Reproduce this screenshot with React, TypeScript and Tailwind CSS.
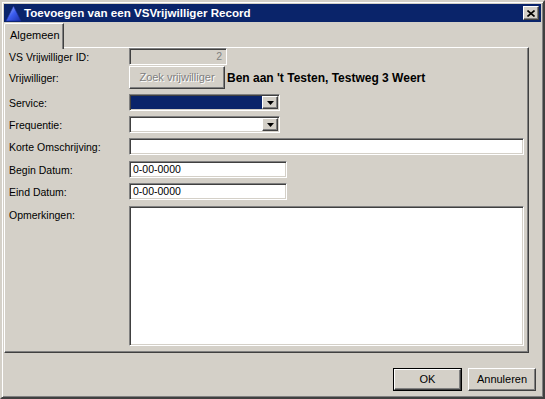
import React from 'react';

const sunken =
  'border border-t-[#808080] border-l-[#808080] border-b-white border-r-white shadow-[inset_1px_1px_0_#404040,inset_-1px_-1px_0_#d4d0c8]';
const raised =
  'border border-t-white border-l-white border-b-[#404040] border-r-[#404040] shadow-[inset_-1px_-1px_0_#808080,inset_1px_1px_0_#d4d0c8]';

function Label({ children }: { children: React.ReactNode }) {
  return <div className="w-[124px] shrink-0 pl-[4px] leading-[14px]">{children}</div>;
}

function DropArrow() {
  return (
    <div className={`${raised} w-[16px] h-full bg-[#d4d0c8] flex items-center justify-center shrink-0`}>
      <svg width="7" height="4" viewBox="0 0 7 4">
        <polygon points="0,0 7,0 3.5,4" fill="#000" />
      </svg>
    </div>
  );
}

function Combo({ selected }: { selected?: boolean }) {
  return (
    <div className={`${sunken} w-[151px] h-[17px] bg-white flex p-[1px]`}>
      <div className={`flex-1 ${selected ? 'bg-[#0a246a]' : 'bg-white'}`} />
      <DropArrow />
    </div>
  );
}

export default function App() {
  return (
    <div
      className="w-[545px] h-[399px] bg-[#d4d0c8] border-2 border-t-[#d4d0c8] border-l-[#d4d0c8] border-b-[#404040] border-r-[#404040] shadow-[inset_1px_1px_0_#fff,inset_-1px_-1px_0_#808080] p-[2px] flex flex-col text-black text-[10.5px]"
      style={{ fontFamily: '"Liberation Sans", Arial, sans-serif' }}
    >
      {/* Title bar */}
      <div className="h-[18px] bg-[#0a246a] flex items-center pl-[1px] pr-[1px]">
        <svg width="17" height="17" viewBox="0 0 17 17" className="shrink-0">
          <defs>
            <linearGradient id="tri" x1="0" y1="0" x2="1" y2="1">
              <stop offset="0" stopColor="#b8c8ff" />
              <stop offset="0.5" stopColor="#3c5ef0" />
              <stop offset="1" stopColor="#1a2fa8" />
            </linearGradient>
          </defs>
          <polygon points="8.5,1 16,16 1,16" fill="url(#tri)" stroke="#1a2a90" strokeWidth="0.6" />
        </svg>
        <div className="ml-[2px] text-white font-bold text-[11.6px] leading-[18px] flex-1 whitespace-nowrap">
          Toevoegen van een VSVrijwilliger Record
        </div>
        <div className={`${raised} w-[16px] h-[14px] bg-[#d4d0c8] flex items-center justify-center mr-[1px]`}>
          <svg width="8" height="7" viewBox="0 0 8 7">
            <path d="M0.5 0.5 L7.5 6.5 M7.5 0.5 L0.5 6.5" stroke="#000" strokeWidth="1.6" />
          </svg>
        </div>
      </div>

      {/* Tab strip */}
      <div className="mt-[1px] flex relative z-10 -mb-[2px]">
        <div className="w-[60px] h-[26px] bg-[#d4d0c8] border-l border-t border-r border-l-white border-t-white border-r-[#404040] shadow-[inset_-1px_0_0_#808080] rounded-tl-[2px] pl-[5px] pt-[4px] leading-[14px] text-[11px]">
          Algemeen
        </div>
      </div>

      {/* Tab panel */}
      <div className="w-[525px] h-[306px] border border-t-white border-l-white border-b-[#404040] border-r-[#404040] shadow-[inset_-1px_-1px_0_#808080] flex flex-col">
        <div className="flex items-center h-[17px]">
          <Label>VS Vrijwilliger ID:</Label>
          <div className={`${sunken} w-[98px] h-[17px] bg-[#d4d0c8] text-right pr-[4px] leading-[15px] text-[#808080]`}>2</div>
        </div>
        <div className="flex items-center h-[23px] mt-[1px]">
          <Label>Vrijwilliger:</Label>
          <div className={`${raised} w-[96px] h-[23px] bg-[#d4d0c8] flex items-center justify-center text-[#808080] text-[11px] [text-shadow:1px_1px_0_#fff]`}>
            Zoek vrijwilliger
          </div>
          <div className="ml-[2px] font-bold text-[12px] whitespace-nowrap">Ben aan 't Testen, Testweg 3 Weert</div>
        </div>
        <div className="flex items-center h-[17px] mt-[5px]">
          <Label>Service:</Label>
          <Combo selected />
        </div>
        <div className="flex items-center h-[17px] mt-[5px]">
          <Label>Frequentie:</Label>
          <Combo />
        </div>
        <div className="flex items-center h-[17px] mt-[5px]">
          <Label>Korte Omschrijving:</Label>
          <div className={`${sunken} w-[395px] h-[17px] bg-white`} />
        </div>
        <div className="flex items-center h-[17px] mt-[6px]">
          <Label>Begin Datum:</Label>
          <div className={`${sunken} w-[158px] h-[17px] bg-white pl-[3px] leading-[15px]`}>0-00-0000</div>
        </div>
        <div className="flex items-center h-[17px] mt-[5px]">
          <Label>Eind Datum:</Label>
          <div className={`${sunken} w-[158px] h-[17px] bg-white pl-[3px] leading-[15px]`}>0-00-0000</div>
        </div>
        <div className="flex items-start mt-[6px]">
          <div className="pt-[2px]">
            <Label>Opmerkingen:</Label>
          </div>
          <div className={`${sunken} w-[395px] h-[140px] bg-white`} />
        </div>
      </div>

      {/* Buttons */}
      <div className="flex justify-end gap-[6px] mt-[15px] pr-[5px]">
        <div className="w-[69px] h-[23px] border border-black">
          <div className={`${raised} w-full h-full bg-[#d4d0c8] flex items-center justify-center text-[11px]`}>OK</div>
        </div>
        <div className={`${raised} w-[68px] h-[23px] bg-[#d4d0c8] flex items-center justify-center text-[11px]`}>Annuleren</div>
      </div>
    </div>
  );
}
